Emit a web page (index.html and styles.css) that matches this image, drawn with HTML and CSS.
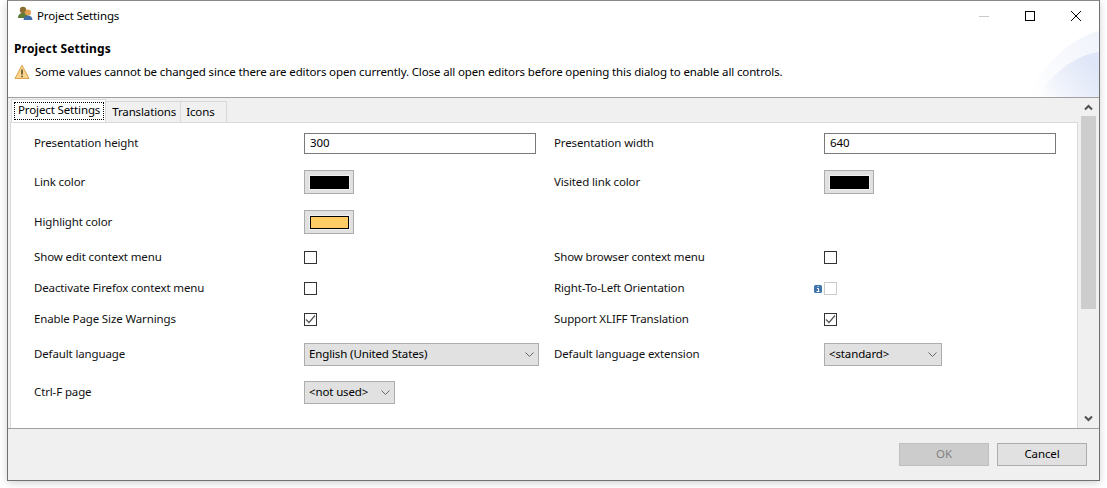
FILE: index.html
```html
<!DOCTYPE html>
<html lang="en">
<head>
<meta charset="utf-8">
<title>Project Settings</title>
<link rel="stylesheet" href="styles.css">
</head>
<body>
<div class="window">
  <div class="titlebar">
    <svg class="app-icon" width="17" height="16" viewBox="0 0 17 16">
      <circle cx="6" cy="4" r="3.2" fill="#8a6d2f"/>
      <path d="M1 12c0-3.5 2-5 5-5s5 1.500 5 5z" fill="#5f7a35"/>
      <circle cx="11" cy="6.500" r="3" fill="#e0a050"/>
      <path d="M6.500 14c0-3 2-4.500 4.500-4.500s4.500 1.500 4.500 4.500z" fill="#3f6ea8"/>
    </svg>
    <span class="title-text">Project Settings</span>
    <div class="win-controls">
      <svg class="win-btn" width="46" height="32" viewBox="0 0 46 32"><path d="M18 15.500h10" stroke="#c8c8c8"/></svg>
      <svg class="win-btn" width="46" height="32" viewBox="0 0 46 32"><rect x="18.500" y="10.500" width="9" height="9" fill="none" stroke="#000"/></svg>
      <svg class="win-btn" width="46" height="32" viewBox="0 0 46 32"><path d="M18 10l10 10M28 10l-10 10" stroke="#000" fill="none"/></svg>
    </div>
  </div>
  <div class="banner">
    <svg class="banner-art" width="80" height="67" viewBox="0 0 80 67">
      <defs>
        <linearGradient id="fade" x1="0" y1="1" x2="1" y2="0.400">
          <stop offset="0.050" stop-color="#dfe6f7" stop-opacity="0"/>
          <stop offset="1" stop-color="#dfe6f7"/>
        </linearGradient>
      </defs>
      <path d="M8 67C20 40 50 8 80 1V67z" fill="url(#fade)" opacity=".4"/>
      <path d="M18 67C30 48 52 26 80 22V67z" fill="url(#fade)"/>
    </svg>
    <h1 class="banner-title">Project Settings</h1>
    <div class="banner-msg">
      <svg width="16" height="16" viewBox="0 0 16 16">
        <path d="M8 1.200L15 14.500H1z" fill="#fbd68c" stroke="#d9a04e" stroke-linejoin="round"/>
        <path d="M8 5.500v5" stroke="#5a4a30" stroke-width="1.600"/>
        <circle cx="8" cy="12.300" r=".9" fill="#5a4a30"/>
      </svg>
      <span>Some values cannot be changed since there are editors open currently. Close all open editors before opening this dialog to enable all controls.</span>
    </div>
  </div>
  <div class="middle">
    <div class="tabs-area">
      <div class="tabstrip">
        <div class="tab active"><span class="tab-focus">Project Settings</span></div>
        <div class="tab tab-translations">Translations</div>
        <div class="tab tab-icons">Icons</div>
      </div>
      <div class="tab-pane">
        <div class="form">
          <label>Presentation height</label>
          <div class="cell"><input class="text" type="text" value="300" readonly></div>
          <label>Presentation width</label>
          <div class="cell"><input class="text" type="text" value="640" readonly></div>

          <label>Link color</label>
          <div class="cell"><div class="swatch"><span class="chip black"></span></div></div>
          <label>Visited link color</label>
          <div class="cell"><div class="swatch"><span class="chip black"></span></div></div>

          <label>Highlight color</label>
          <div class="cell"><div class="swatch"><span class="chip amber"></span></div></div>
          <span></span><span></span>

          <label>Show edit context menu</label>
          <div class="cell"><span class="check"></span></div>
          <label>Show browser context menu</label>
          <div class="cell"><span class="check"></span></div>

          <label>Deactivate Firefox context menu</label>
          <div class="cell"><span class="check"></span></div>
          <label>Right-To-Left Orientation</label>
          <div class="cell">
            <span class="check off"></span>
            <svg class="info" width="8" height="8" viewBox="0 0 8 8"><rect width="8" height="8" rx="1.500" fill="#3f74ad"/><path d="M3.500 1.500h1M3 3.500h1.500v3M2.500 6.500h3" stroke="#fff" fill="none"/></svg>
          </div>

          <label>Enable Page Size Warnings</label>
          <div class="cell"><span class="check"><svg width="11" height="11" viewBox="0 0 11 11"><path d="M1 5.500l3 3 6-7" fill="none" stroke="#555" stroke-width="1.200"/></svg></span></div>
          <label>Support XLIFF Translation</label>
          <div class="cell"><span class="check"><svg width="11" height="11" viewBox="0 0 11 11"><path d="M1 5.500l3 3 6-7" fill="none" stroke="#555" stroke-width="1.200"/></svg></span></div>

          <label>Default language</label>
          <div class="cell"><div class="select w-lang"><span>English (United States)</span><svg width="9" height="5" viewBox="0 0 9 5"><path d="M.5.500L4.500 4.500 8.500.500" fill="none" stroke="#666"/></svg></div></div>
          <label>Default language extension</label>
          <div class="cell"><div class="select w-std"><span>&lt;standard&gt;</span><svg width="9" height="5" viewBox="0 0 9 5"><path d="M.5.500L4.500 4.500 8.500.500" fill="none" stroke="#666"/></svg></div></div>

          <label>Ctrl-F page</label>
          <div class="cell"><div class="select w-unused"><span>&lt;not used&gt;</span><svg width="9" height="5" viewBox="0 0 9 5"><path d="M.5.500L4.500 4.500 8.500.500" fill="none" stroke="#666"/></svg></div></div>
          <span></span><span></span>
        </div>
      </div>
    </div>
    <div class="scrollbar">
      <svg width="15" height="15" viewBox="0 0 15 15"><path d="M4 11.500l3.500-3.500 3.500 3.500" fill="none" stroke="#505050" stroke-width="2"/></svg>
      <div class="track"><div class="thumb"></div></div>
      <svg width="15" height="15" viewBox="0 0 15 15"><path d="M4 3.500l3.500 3.500 3.500-3.500" fill="none" stroke="#505050" stroke-width="2"/></svg>
    </div>
  </div>
  <div class="footer">
    <button class="btn disabled" type="button">OK</button>
    <button class="btn" type="button">Cancel</button>
  </div>
</div>
</body>
</html>
```

FILE: styles.css
```css
* { box-sizing: border-box; }
html, body { margin: 0; padding: 0; background: #fff; }
body {
  height: 488px;
  overflow: hidden;
  padding-left: 7px;
  font-family: "Noto Sans", "Open Sans", sans-serif;
  font-size: 11.5px;
  letter-spacing: -0.13px;
  color: #000;
}
.window {
  width: 1093px;
  height: 481px;
  border: 1px solid #707070;
  border-top-color: #8a8a8a;
  background: #f0f0f0;
  display: flex;
  flex-direction: column;
  box-shadow: 0 2px 8px rgba(0,0,0,.18);
}
.titlebar {
  height: 31px;
  flex: none;
  background: #fff;
  display: flex;
  align-items: center;
  padding-left: 9px;
}
.app-icon { flex: none; margin-right: 3px; margin-top: -5px; }
.title-text { margin-top: -3px; }
.win-controls { margin-left: auto; display: flex; }
.win-btn { display: block; }
.banner {
  height: 66px;
  flex: none;
  background: #fff;
  position: relative;
  padding: 8px 0 0 6px;
  border-bottom: 1px solid #a0a0a0;
}
.banner-art { position: absolute; right: 0; bottom: 0; }
.banner-title {
  margin: 0;
  font-size: 12px;
  letter-spacing: 0.15px;
  line-height: 17px;
  font-weight: 700;
}
.banner-msg {
  display: flex;
  align-items: center;
  gap: 5px;
  margin-top: 6px;
  line-height: 17px;
  position: relative;
}
.middle { flex: 1; display: flex; padding: 0 3px 0 2px; border-bottom: 1px solid #a0a0a0; min-height: 0; }
.tabs-area { flex: 1; display: flex; flex-direction: column; min-width: 0; }
.tabstrip { height: 24px; flex: none; display: flex; align-items: flex-end; padding-left: 1px; position: relative; }
.tab {
  height: 21px;
  padding: 0 6px;
  line-height: 19px;
  border: 1px solid #d9d9d9;
  border-bottom: 0;
  border-left: 0;
  background: #f0f0f0;
}
.tab-translations { padding: 0 4px 0 6px; }
.tab-icons { padding: 0 11px 0 5px; }
.tab.active {
  height: 23px;
  background: #fff;
  padding: 2px 1px 0 2px;
  border-left: 1px solid #d9d9d9;
  line-height: 16px;
}
.tab-focus { display: block; padding: 0 4px 0 4px; outline: 1px dotted #000; outline-offset: -1px; height: 18px; white-space: nowrap; }
.tab-pane {
  flex: 1;
  background: #fff;
  border: 1px solid #d9d9d9;
  border-bottom: 0;
  margin-right: 3px;
  min-height: 0;
}
.form {
  display: grid;
  grid-template-columns: 270px 250px 270px 1fr;
  grid-template-rows: 39px 38px 42px 28px 34px 28px 42px 34px;
  margin-top: 1px;
  padding-left: 23px;
  align-items: center;
}
.form label { white-space: nowrap; color: #111; margin-top: -2px; }
.cell { display: flex; align-items: center; position: relative; }
.text {
  width: 232px;
  height: 21px;
  border: 1px solid #7a7a7a;
  padding: 0 5px 2px;
  font: inherit;
  letter-spacing: inherit;
  color: #000;
  background: #fff;
  outline: 0;
}
.swatch {
  width: 50px;
  height: 24px;
  background: #e1e1e1;
  border: 1px solid #adadad;
  display: flex;
  align-items: center;
  justify-content: center;
}
.chip { width: 39px; height: 13px; border: 1px solid #000; box-shadow: 0 0 0 1px #f0f0f0; }
.chip.black { background: #000; }
.chip.amber { background: #ffcc66; }
.check {
  width: 13px;
  height: 13px;
  border: 1px solid #333;
  background: #fff;
  display: flex;
  align-items: center;
  justify-content: center;
}
.check.off { border-color: #ccc; }
.info { position: absolute; left: -10px; top: 3px; }
.select {
  height: 23px;
  background: #e1e1e1;
  border: 1px solid #adadad;
  display: flex;
  align-items: center;
  justify-content: space-between;
  padding: 0 3px 2px 4px;
}
.select svg { margin-right: 1px; margin-top: 2px; }
.w-lang { width: 235px; }
.w-std { width: 118px; }
.w-unused { width: 91px; }
.scrollbar { width: 15px; flex: none; display: flex; flex-direction: column; }
.scrollbar svg { flex: none; }
.track { flex: 1; min-height: 0; display: flex; flex-direction: column; }
.thumb { height: 193px; background: #cdcdcd; margin-top: 3px; }
.footer {
  flex: none;
  height: 51px;
  display: flex;
  justify-content: flex-end;
  align-items: flex-start;
  gap: 8px;
  padding: 14px 12px 0 0;
}
.btn {
  width: 90px;
  height: 23px;
  background: #e1e1e1;
  border: 1px solid #adadad;
  font: inherit;
  letter-spacing: inherit;
  color: #000;
  padding: 0 0 2px;
}
.btn.disabled { background: #ccc; border-color: #bfbfbf; color: #838383; }
```
